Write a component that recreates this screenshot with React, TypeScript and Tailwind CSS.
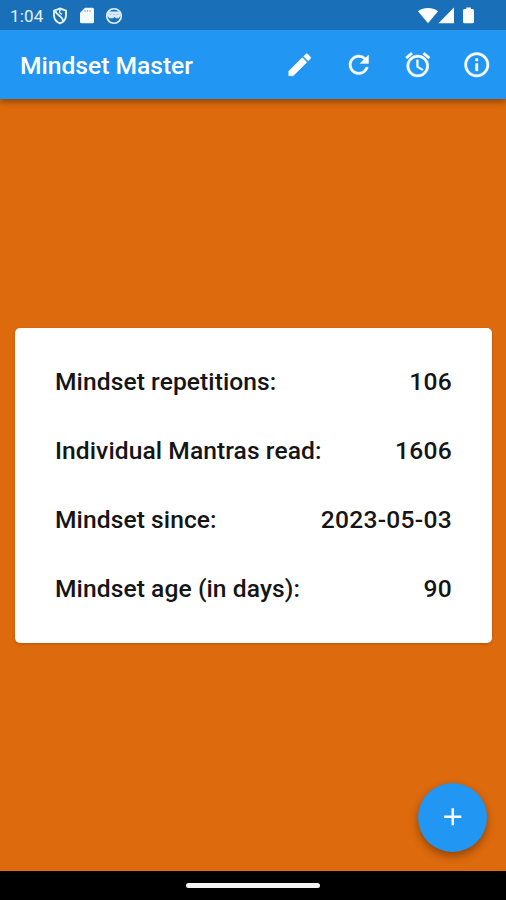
import type { ReactNode } from "react";
import { MdAdd, MdAlarm, MdEdit, MdInfoOutline, MdRefresh } from "react-icons/md";

const stats = [
  { label: "Mindset repetitions:", value: "106" },
  { label: "Individual Mantras read:", value: "1606" },
  { label: "Mindset since:", value: "2023-05-03" },
  { label: "Mindset age (in days):", value: "90" },
];

function StatusBar() {
  return (
    <div className="flex h-[30px] shrink-0 items-center bg-[#1a70b8] pt-[1px] pl-[10px] text-white">
      <span className="w-[42px] pt-px text-[17px] leading-none tracking-[0.150px] text-[#e4f3ff]">1:04</span>
      <svg width="16" height="18" viewBox="0 0 16 18" fill="none" stroke="#e4f3ff" strokeWidth="1.9">
        <path d="M8 1.500 14 3.600v4.700c0 3.800-2.500 6.700-6 8-3.500-1.300-6-4.200-6-8V3.600Z" />
        <path d="M3.500 4C4 8 11 9.500 11 14" />
        <path d="M8.500 2.500C6.500 4.500 8 6.500 10 7.500" strokeWidth="1.300" />
      </svg>
      <svg className="ml-[12px]" width="14" height="17" viewBox="0 0 14 17" fill="#f2f9ff">
        <path d="M5 .7h7.500q1.500 0 1.500 1.500v12.600q0 1.500-1.500 1.500h-11Q0 16.300 0 14.800V5.700Z" />
        <path d="M5 3v2M7.500 3v2M10 3v2" stroke="#8dbbe0" strokeWidth="1.100" />
      </svg>
      <svg className="ml-[11px]" width="18" height="18" viewBox="0 0 18 18">
        <circle cx="9" cy="9" r="7.300" fill="none" stroke="#e4f3ff" strokeWidth="1.600" />
        <path d="M2.500 4.500h13l.5 4-2.500 2.700H11L9.500 10 8 11.200H4.500L2 8.500Z" fill="#d6eaff" />
        <path d="M4.500 7.300h2M8.500 7.300h1.500M11.500 7.300h2" stroke="#9cc5e8" strokeWidth="1" />
      </svg>
      <svg className="ml-auto" width="20" height="17" viewBox="0 0 20 17" fill="#fff">
        <path d="M0 4.200C5.700-.2 14.300-.2 20 4.200L10 16.300Z" />
      </svg>
      <svg width="17" height="17" viewBox="0 0 17 17" fill="#fff">
        <path d="M16 .5v15.800H.5Z" />
      </svg>
      <svg className="ml-[8px] mr-[32px]" width="11" height="17" viewBox="0 0 11 17" fill="#fff">
        <path d="M3.200.5h4.600V2h1.700Q11 2 11 3.500v11.300q0 1.500-1.500 1.500h-8Q0 16.300 0 14.800V3.500Q0 2 1.500 2h1.700Z" />
      </svg>
    </div>
  );
}

function Action({ label, children }: { label: string; children: ReactNode }) {
  return (
    <button
      aria-label={label}
      className="flex size-[59px] items-center justify-center [&_path:not([fill=none])]:[stroke-width:0.3px]"
    >
      {children}
    </button>
  );
}

export default function App() {
  return (
    <div className="flex h-[900px] w-[506px] flex-col overflow-hidden bg-[#dd6a0d] font-['Roboto',sans-serif]">
      <div className="z-10 shrink-0 shadow-[0_3px_6px_rgba(0,0,0,0.35)]">
        <StatusBar />
        <header className="flex h-[69px] items-center bg-[#2196f3] pl-5 text-white">
          <h1 className="pt-[3px] text-[24.600px] leading-none font-medium">Mindset Master</h1>
          <div className="ml-auto flex">
            <Action label="Edit"><MdEdit size={29.5} /></Action>
            <Action label="Refresh"><MdRefresh size={29.5} /></Action>
            <Action label="Alarm"><MdAlarm size={29.5} /></Action>
            <Action label="Info"><MdInfoOutline size={29.5} /></Action>
          </div>
        </header>
      </div>

      <main className="flex flex-1 flex-col px-[15px] pt-[228.500px]">
        <section className="flex h-[315px] w-[477px] flex-col rounded-[5px] bg-white px-10 py-[19.500px] shadow-[0_1px_3px_rgba(0,0,0,0.2)]">
          {stats.map((s) => (
            <div
              key={s.label}
              className="flex h-[69px] shrink-0 items-center justify-between pt-[2px] text-[24.600px] leading-none font-medium text-[#151515]"
            >
              <span className="tracking-[0.080px]">{s.label}</span>
              <span className="tracking-[0.280px]">{s.value}</span>
            </div>
          ))}
        </section>
        <button
          aria-label="Add"
          className="mt-auto mr-[4px] mb-[19.500px] flex size-[69px] items-center justify-center self-end rounded-full bg-[#2196f3] text-white shadow-[0_4px_8px_rgba(0,0,0,0.35)]"
        >
          <MdAdd size={29.5} />
        </button>
      </main>

      <footer className="flex h-[29px] shrink-0 items-center justify-center bg-black">
        <div className="h-[5px] w-[134px] rounded-full bg-[#f3f3f3]" />
      </footer>
    </div>
  );
}
